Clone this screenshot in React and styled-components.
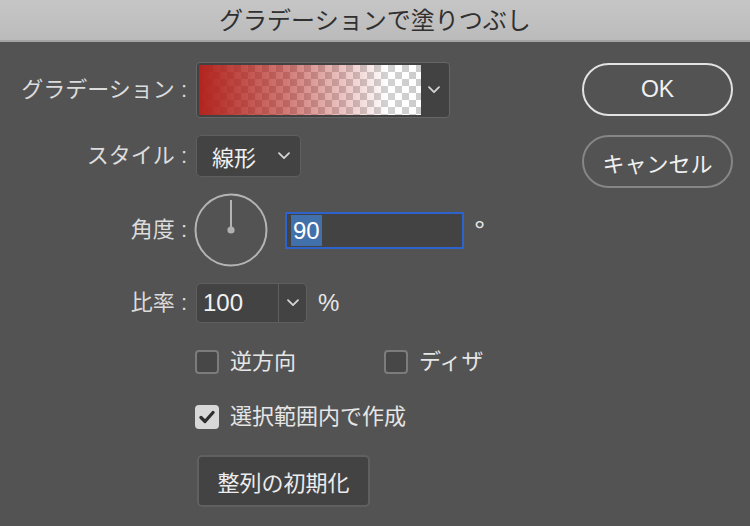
import * as React from "react";
import styled, { createGlobalStyle } from "styled-components";

const GlobalStyle = createGlobalStyle`
  html, body {
    margin: 0;
    padding: 0;
    background: #535353;
  }
  * {
    box-sizing: border-box;
  }
`;

const FONT = `"Liberation Sans", "Noto Sans CJK JP", sans-serif`;

const Window = styled.div`
  width: 750px;
  height: 526px;
  background: #535353;
  font-family: ${FONT};
  color: #e2e2e2;
  overflow: hidden;
`;

const TitleBar = styled.div`
  height: 42px;
  display: flex;
  align-items: center;
  justify-content: center;
  background: linear-gradient(#c6c6c6, #bbbbbb);
  border-bottom: 2px solid #a4a4a4;
  color: #303030;
  font-size: 24px;
  line-height: 1;
  padding-top: 1px;
`;

const Body = styled.div`
  display: flex;
  flex-direction: row;
`;

const Form = styled.div`
  display: flex;
  flex-direction: column;
  padding-top: 20px;
`;

const Row = styled.div`
  display: flex;
  flex-direction: row;
  align-items: center;
  height: ${({ $h }) => ($h ? `${$h}px` : "auto")};
  margin-top: ${({ $gap }) => $gap || 0}px;
  padding-left: ${({ $indent }) => ($indent ? 195 : 0)}px;
`;

const Label = styled.div`
  width: 187px;
  margin-right: 9px;
  text-align: right;
  font-size: 22px;
  line-height: 26px;
  color: #dcdcdc;
  white-space: nowrap;
`;

const GradientBox = styled.div`
  width: 254px;
  height: 56px;
  display: flex;
  padding: 2px;
  background: #424242;
  border: 1px solid #666;
  border-radius: 4px;
`;

const Swatch = styled.div`
  width: 222px;
  height: 50px;
  background-image: linear-gradient(
      to right,
      rgba(178, 36, 30, 1),
      rgba(178, 36, 30, 0.6) 40%,
      rgba(255, 255, 255, 0.15) 85%,
      rgba(255, 255, 255, 0)
    ),
    repeating-conic-gradient(#cbcbcb 0 25%, #ffffff 0 50%);
  background-size: 100% 100%, 14px 14px;
`;

const Arrow = styled.div`
  flex: 1;
  display: flex;
  align-items: center;
  justify-content: center;
  border-left: ${({ $divider }) => ($divider ? "1px solid #5e5e5e" : "none")};
`;

const Select = styled.div`
  width: 105px;
  height: 42px;
  display: flex;
  align-items: center;
  padding: 0 10px 0 15px;
  background: #434343;
  border: 1px solid #5f5f5f;
  border-radius: 5px;
  font-size: 22px;
  color: #f0f0f0;
  justify-content: space-between;
`;

const Dial = styled.svg`
  display: block;
  width: 74px;
  height: 74px;
  margin-left: -2px;
`;

const AngleInput = styled.div`
  width: 179px;
  height: 37px;
  margin-left: 17px;
  padding: 1px 4px;
  display: flex;
  align-items: center;
  background: #434343;
  border: 2px solid #2e62cc;
`;

const Selected = styled.span`
  background: #4270aa;
  color: #ffffff;
  font-size: 24px;
  line-height: 31px;
  padding: 0 2px;
`;

const Unit = styled.span`
  font-size: ${({ $size }) => $size}px;
  line-height: 24px;
  margin-left: ${({ $ml }) => $ml}px;
  margin-top: ${({ $mt }) => $mt || 0}px;
  color: #e6e6e6;
`;

const Combo = styled.div`
  width: 111px;
  height: 40px;
  display: flex;
  background: #434343;
  border: 1px solid #5f5f5f;
  border-radius: 5px;
  overflow: hidden;
`;

const ComboValue = styled.div`
  width: 81px;
  display: flex;
  align-items: center;
  padding-left: 6px;
  font-size: 24px;
  color: #f2f2f2;
`;

const CheckItem = styled.label`
  display: flex;
  align-items: center;
  width: ${({ $width }) => ($width ? `${$width}px` : "auto")};
  font-size: 22px;
  color: #e6e6e6;
  line-height: 24px;
`;

const Box = styled.span`
  width: 24px;
  height: 24px;
  margin-right: 11px;
  border-radius: 4px;
  display: flex;
  align-items: center;
  justify-content: center;
  background: ${({ $checked }) => ($checked ? "#d8d8d8" : "#474747")};
  border: ${({ $checked }) => ($checked ? "none" : "2px solid #7c7c7c")};
`;

const FlatButton = styled.div`
  width: 173px;
  height: 52px;
  margin-left: 2px;
  display: flex;
  align-items: center;
  justify-content: center;
  background: #434343;
  border: 2px solid #606060;
  border-radius: 5px;
  font-size: 22px;
  color: #ececec;
`;

const Side = styled.div`
  margin-left: auto;
  margin-right: 17px;
  padding-top: 21px;
  display: flex;
  flex-direction: column;
  gap: 19px;
`;

const PillButton = styled.div`
  width: 151px;
  height: 53px;
  display: flex;
  align-items: center;
  justify-content: center;
  border-radius: 27px;
  border: 2px solid ${({ $primary }) => ($primary ? "#e2e2e2" : "#868686")};
  font-size: ${({ $primary }) => ($primary ? 23 : 22)}px;
  color: #f0f0f0;
`;

function Chevron({ width = 12 }) {
  return (
    <svg width={width} height={width * 0.6} viewBox="0 0 12 7">
      <polyline
        points="1,1 6,6 11,1"
        fill="none"
        stroke="#d4d4d4"
        strokeWidth="1.8"
        strokeLinecap="round"
        strokeLinejoin="round"
      />
    </svg>
  );
}

function Tick() {
  return (
    <svg width="16" height="14" viewBox="0 0 16 14">
      <polyline
        points="2,7.5 6,11.5 14,2.5"
        fill="none"
        stroke="#2e2e2e"
        strokeWidth="3.2"
        strokeLinecap="round"
        strokeLinejoin="round"
      />
    </svg>
  );
}

function Check({ label, checked, width }) {
  return (
    <CheckItem $width={width}>
      <Box $checked={checked}>{checked && <Tick />}</Box>
      {label}
    </CheckItem>
  );
}

export default function App() {
  return (
    <Window>
      <GlobalStyle />
      <TitleBar>グラデーションで塗りつぶし</TitleBar>
      <Body>
        <Form>
          <Row $h={56}>
            <Label>グラデーション :</Label>
            <GradientBox>
              <Swatch />
              <Arrow>
                <Chevron />
              </Arrow>
            </GradientBox>
          </Row>
          <Row $h={42} $gap={17}>
            <Label>スタイル :</Label>
            <Select>
              線形
              <Chevron />
            </Select>
          </Row>
          <Row $h={74} $gap={16}>
            <Label>角度 :</Label>
            <Dial viewBox="0 0 74 74">
              <circle cx="37" cy="37" r="35.5" fill="none" stroke="#b4b4b4" strokeWidth="2" />
              <line x1="37" y1="37" x2="37" y2="7" stroke="#b4b4b4" strokeWidth="2" />
              <circle cx="37" cy="37" r="3.6" fill="#b0b0b0" />
            </Dial>
            <AngleInput>
              <Selected>90</Selected>
            </AngleInput>
            <Unit $size={28} $ml={10} $mt={2}>°</Unit>
          </Row>
          <Row $h={40} $gap={16}>
            <Label>比率 :</Label>
            <Combo>
              <ComboValue>100</ComboValue>
              <Arrow $divider>
                <Chevron />
              </Arrow>
            </Combo>
            <Unit $size={24} $ml={11}>%</Unit>
          </Row>
          <Row $h={24} $gap={27} $indent>
            <Check label="逆方向" width={189} />
            <Check label="ディザ" />
          </Row>
          <Row $h={24} $gap={31} $indent>
            <Check label="選択範囲内で作成" checked />
          </Row>
          <Row $h={52} $gap={26} $indent>
            <FlatButton>整列の初期化</FlatButton>
          </Row>
        </Form>
        <Side>
          <PillButton $primary>OK</PillButton>
          <PillButton>キャンセル</PillButton>
        </Side>
      </Body>
    </Window>
  );
}
